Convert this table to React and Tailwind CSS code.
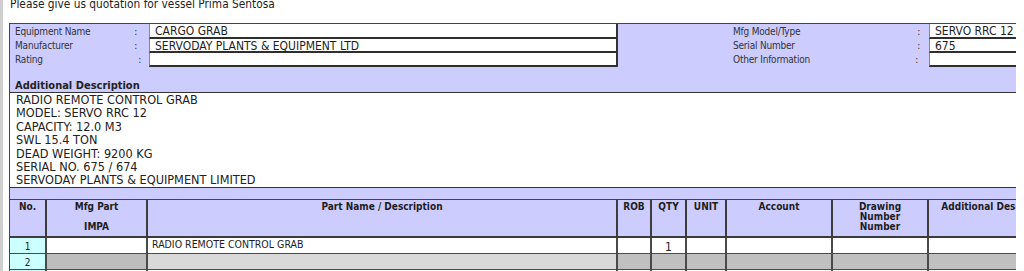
export default function App() {
  const desc = [
    "RADIO REMOTE CONTROL GRAB",
    "MODEL: SERVO RRC 12",
    "CAPACITY: 12.0 M3",
    "SWL 15.4 TON",
    "DEAD WEIGHT: 9200 KG",
    "SERIAL NO. 675 / 674",
    "SERVODAY PLANTS & EQUIPMENT LIMITED",
  ];
  const leftRows = [
    { label: "Equipment Name", value: "CARGO GRAB", pr: "pr-[12px]", h: "h-[15px]" },
    { label: "Manufacturer", value: "SERVODAY PLANTS & EQUIPMENT LTD", pr: "pr-[12px]", h: "h-[14px]" },
    { label: "Rating", value: "", pr: "pr-[8px]", h: "h-[14px]" },
  ];
  const rightRows = [
    { label: "Mfg Model/Type", value: "SERVO RRC 12", pr: "pr-[9px]", h: "h-[15px]" },
    { label: "Serial Number", value: "675", pr: "pr-[9px]", h: "h-[14px]" },
    { label: "Other Information", value: "", pr: "pr-[11px]", h: "h-[14px]" },
  ];
  const head = "border-r-2 border-b-2 border-[#3c3c3c] text-[10px] font-bold leading-[10px] text-[#1e1e1e] text-center pt-[2px] h-[38px]";
  const cell = "border-r-2 border-b border-[#4a4a4a] h-[16px]";
  return (
    <div className="flex min-h-[271px] bg-white font-['DejaVu_Sans_Condensed','Liberation_Sans',sans-serif] text-[#1e1e1e]">
      <div className="w-[3px] bg-[#cfcfcf]" />
      <div className="ml-[6px] w-[1007px] overflow-hidden">
        <div className="mt-[-2px] pl-[1px] text-[11.8px] leading-[13px]">
          Please give us quotation for vessel Prima Sentosa
        </div>
        <div className="mt-[12px] border-l border-t border-[#444] bg-[#ccccff]">
          <div className="flex">
            <div className="w-[139px]">
              {leftRows.map((r) => (
                <div key={r.label} className={`flex ${r.h} items-center justify-between pl-[5px] ${r.pr} text-[10px] leading-[14px] tracking-[-0.2px] text-[#333]`}>
                  <span>{r.label}</span>
                  <span>:</span>
                </div>
              ))}
            </div>
            <div className="w-[469px] border-r-2 border-[#333]">
              {leftRows.map((r) => (
                <div key={r.label} className={`${r.h} border-b-2 border-l border-b-[#2e2e2e] border-l-[#888] bg-white pl-[5px] pt-[1px] text-[12px] leading-[12px]`}>
                  {r.value}
                </div>
              ))}
            </div>
            <div className="w-[311px]">
              {rightRows.map((r) => (
                <div key={r.label} className={`flex ${r.h} items-center justify-between pl-[115px] ${r.pr} text-[10px] leading-[14px] tracking-[-0.2px] text-[#333]`}>
                  <span>{r.label}</span>
                  <span>:</span>
                </div>
              ))}
            </div>
            <div className="flex-1">
              {rightRows.map((r) => (
                <div key={r.label} className={`${r.h} border-b-2 border-l border-b-[#2e2e2e] border-l-[#888] bg-white pl-[5px] pt-[1px] text-[12px] leading-[12px]`}>
                  {r.value}
                </div>
              ))}
            </div>
          </div>
          <div className="h-[25px] pl-[5px] pt-[13px] text-[11px] font-bold leading-[11px] text-[#222]">
            Additional Description
          </div>
          <div className="border-y border-[#333] bg-white pl-[6px] text-[12.6px] leading-[13.4px] text-[#222]">
            {desc.map((d) => (
              <div key={d}>{d}</div>
            ))}
          </div>
          <div className="h-[11px]" />
          <div className="grid w-[1200px] grid-cols-[37px_101px_470px_34px_35px_40px_106px_96px_140px_141px] border-t border-[#444]">
            <div className={head}>No.</div>
            <div className={head}>
              Mfg Part
              <br />
              <br />
              IMPA
            </div>
            <div className={head}>Part Name / Description</div>
            <div className={head}>ROB</div>
            <div className={head}>QTY</div>
            <div className={head}>UNIT</div>
            <div className={head}>Account</div>
            <div className={head}>
              Drawing
              <br />
              Number
              <br />
              Number
            </div>
            <div className={head}>Additional Description</div>
            <div className={head}>Remarks</div>

            <div className={`${cell} bg-[#ccffff] pt-[3px] text-center text-[10px] leading-[12px]`}>1</div>
            <div className={`${cell} bg-white`} />
            <div className={`${cell} bg-white pl-[4px] pt-[1px] text-[10.5px] leading-[11px]`}>RADIO REMOTE CONTROL GRAB</div>
            <div className={`${cell} bg-white`} />
            <div className={`${cell} bg-white pt-[3px] text-center text-[12px] leading-[12px]`}>1</div>
            <div className={`${cell} bg-white`} />
            <div className={`${cell} bg-white`} />
            <div className={`${cell} bg-white`} />
            <div className={`${cell} bg-white`} />
            <div className={`${cell} bg-white`} />

            <div className={`${cell} bg-[#ccffff] pt-[3px] text-center text-[10px] leading-[12px]`}>2</div>
            <div className={`${cell} bg-[#bdbdbd]`} />
            <div className={`${cell} bg-[#d9d9d9]`} />
            <div className={`${cell} bg-[#c0c0c0]`} />
            <div className={`${cell} bg-[#c0c0c0]`} />
            <div className={`${cell} bg-[#c0c0c0]`} />
            <div className={`${cell} bg-[#c0c0c0]`} />
            <div className={`${cell} bg-[#c0c0c0]`} />
            <div className={`${cell} bg-[#c0c0c0]`} />
            <div className={`${cell} bg-[#c0c0c0]`} />

            <div className={`${cell} bg-[#ccffff] pt-[3px] text-center text-[10px] leading-[12px]`}>3</div>
            <div className={`${cell} bg-white`} />
            <div className={`${cell} bg-white`} />
            <div className={`${cell} bg-white`} />
            <div className={`${cell} bg-white`} />
            <div className={`${cell} bg-white`} />
            <div className={`${cell} bg-white`} />
            <div className={`${cell} bg-white`} />
            <div className={`${cell} bg-white`} />
            <div className={`${cell} bg-white`} />
          </div>
        </div>
      </div>
    </div>
  );
}
